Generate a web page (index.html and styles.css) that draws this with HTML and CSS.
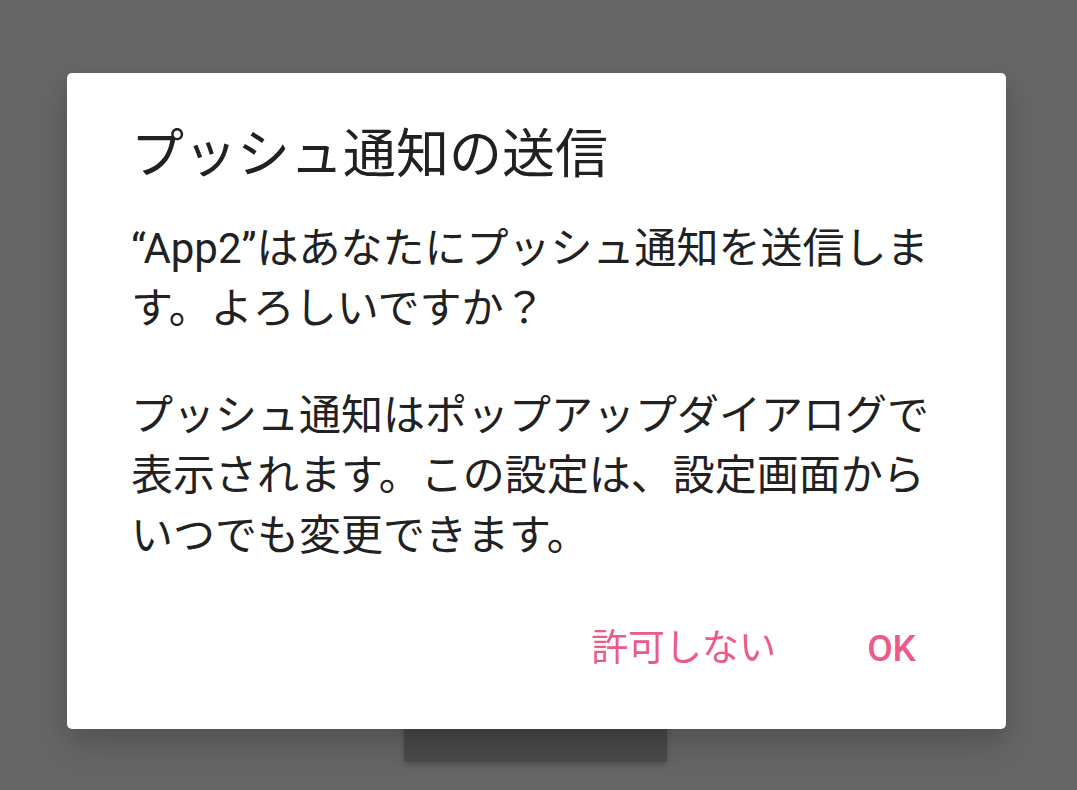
FILE: index.html
```html
<!DOCTYPE html>
<html lang="ja">
<head>
    <meta charset="UTF-8">
    <meta name="viewport" content="width=device-width, initial-scale=1.0">
    <title>プッシュ通知の送信</title>
    <link rel="stylesheet" href="styles.css">
</head>
<body>
    <div class="screen">
        <button class="under-button"></button>

        <div class="dialog">
            <h1 class="dialog-title">プッシュ通知の送信</h1>
            <p class="dialog-text">“App2”はあなたにプッシュ通知を送信します。よろしいですか？</p>
            <p class="dialog-text">プッシュ通知はポップアップダイアログで表示されます。この設定は、設定画面からいつでも変更できます。</p>
            <div class="dialog-actions">
                <button class="text-button">許可しない</button>
                <button class="text-button strong">OK</button>
            </div>
        </div>
    </div>
</body>
</html>
```

FILE: styles.css
```css
* {
    margin: 0;
    padding: 0;
    box-sizing: border-box;
}

body {
    font-family: Roboto, 'Noto Sans CJK JP', sans-serif;
    background: #666666;
    color: #212121;
    width: 1077px;
    height: 790px;
    overflow: hidden;
}

.screen {
    position: relative;
    width: 1077px;
    height: 790px;
    padding: 73px 0 0 67px;
}

/* button of the page below, dimmed by the overlay */
.under-button {
    position: absolute;
    left: 404px;
    top: 690px;
    width: 263px;
    height: 72px;
    border: none;
    border-radius: 3px;
    background: #4a4a4a;
    box-shadow: 0 3px 6px rgba(0, 0, 0, 0.18);
}

.dialog {
    position: relative;
    width: 939px;
    height: 656px;
    background: white;
    border-radius: 5px;
    padding: 50px 64px 0 64px;
    box-shadow: 0 20px 40px rgba(0, 0, 0, 0.12), 0 8px 20px rgba(0, 0, 0, 0.1);
}

.dialog-title {
    font-size: 53px;
    font-weight: normal;
    line-height: 64px;
    color: #212121;
    margin-bottom: 32px;
}

.dialog-text {
    font-size: 42px;
    line-height: 60px;
    color: #212121;
    margin-bottom: 47px;
}

.dialog-actions {
    display: flex;
    justify-content: flex-end;
    align-items: center;
    gap: 43px;
    margin-top: 3px;
    padding-right: 2px;
}

.text-button {
    font-family: Roboto, 'Noto Sans CJK JP', sans-serif;
    background: none;
    border: none;
    color: #ec5a8a;
    font-size: 37px;
    line-height: 72px;
    padding: 0 24px;
}

.text-button.strong {
    font-weight: 500;
    font-size: 37px;
}
```
